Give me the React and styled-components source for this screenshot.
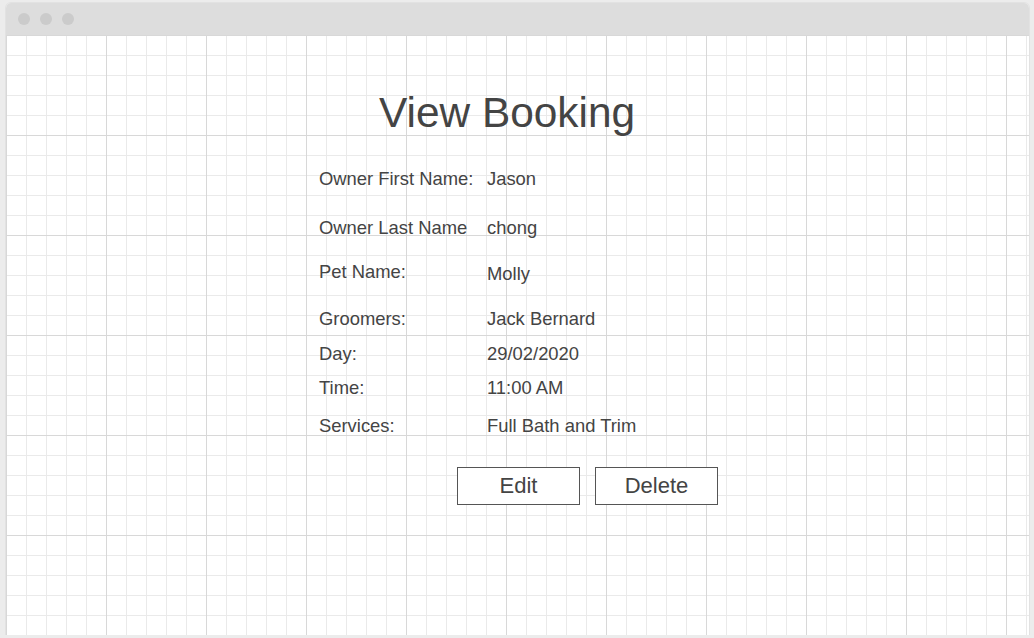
import React from "react"
import styled, { createGlobalStyle } from "styled-components"

const GlobalStyle = createGlobalStyle`
  html, body {
    margin: 0;
    padding: 0;
    background: #ececec;
    font-family: "Liberation Sans", Arial, sans-serif;
  }
`

const Window = styled.div`
  display: flex;
  flex-direction: column;
  width: 1023px;
  height: 632px;
  margin: 3px 0 0 6px;
  border-radius: 5px 5px 0 0;
  overflow: hidden;
  background: #fff;
  box-shadow: 0 0 0 1px #e2e2e2;
`

const TitleBar = styled.div`
  display: flex;
  align-items: center;
  gap: 10px;
  height: 32px;
  padding-left: 12px;
  background: #dddddd;
  flex-shrink: 0;
`

const Dot = styled.span`
  width: 12px;
  height: 12px;
  border-radius: 50%;
  background: #cbcbcb;
`

const Canvas = styled.div`
  flex: 1;
  background-color: #fff;
  background-image:
    linear-gradient(to right, #d8d8d8 1px, transparent 1px),
    linear-gradient(to bottom, #d8d8d8 1px, transparent 1px),
    linear-gradient(to right, #eaeaea 1px, transparent 1px),
    linear-gradient(to bottom, #eaeaea 1px, transparent 1px);
  background-size: 100px 100px, 100px 100px, 20px 20px, 20px 20px;
  padding: 54px 0 0 313px;
  color: #444;
`

const Title = styled.h1`
  margin: 0 0 0 60px;
  font-size: 42.4px;
  line-height: 48px;
  font-weight: 400;
  color: #444;
`

const Details = styled.div`
  display: flex;
  flex-direction: column;
  margin-top: 31px;
`

const Row = styled.div`
  display: grid;
  grid-template-columns: 168px auto;
  font-size: 18.4px;
  line-height: 22px;
  margin-top: ${(p) => p.$gap}px;
`

const Label = styled.span`
  transform: translateY(${(p) => (p.$lift ? -2 : 0)}px);
`

const Value = styled.span``

const Actions = styled.div`
  display: flex;
  gap: 15px;
  margin: 30px 0 0 138px;
`

const Button = styled.button`
  width: 123px;
  height: 38px;
  padding: 0;
  border: 1px solid #555;
  background: #fff;
  font-family: "Liberation Sans", Arial, sans-serif;
  font-size: 22px;
  color: #444;
  cursor: pointer;
`

const rows = [
  { label: "Owner First Name:", value: "Jason", gap: 0 },
  { label: "Owner Last Name", value: "chong", gap: 27 },
  { label: "Pet Name:", value: "Molly", gap: 24, lift: true },
  { label: "Groomers:", value: "Jack Bernard", gap: 23 },
  { label: "Day:", value: "29/02/2020", gap: 13 },
  { label: "Time:", value: "11:00 AM", gap: 12 },
  { label: "Services:", value: "Full Bath and Trim", gap: 16 },
]

const App = () => {
  return (
    <>
      <GlobalStyle />
      <Window>
        <TitleBar>
          <Dot />
          <Dot />
          <Dot />
        </TitleBar>
        <Canvas>
          <Title>View Booking</Title>
          <Details>
            {rows.map((r) => (
              <Row key={r.label} $gap={r.gap}>
                <Label $lift={r.lift}>{r.label}</Label>
                <Value>{r.value}</Value>
              </Row>
            ))}
          </Details>
          <Actions>
            <Button>Edit</Button>
            <Button>Delete</Button>
          </Actions>
        </Canvas>
      </Window>
    </>
  )
}

export default App
